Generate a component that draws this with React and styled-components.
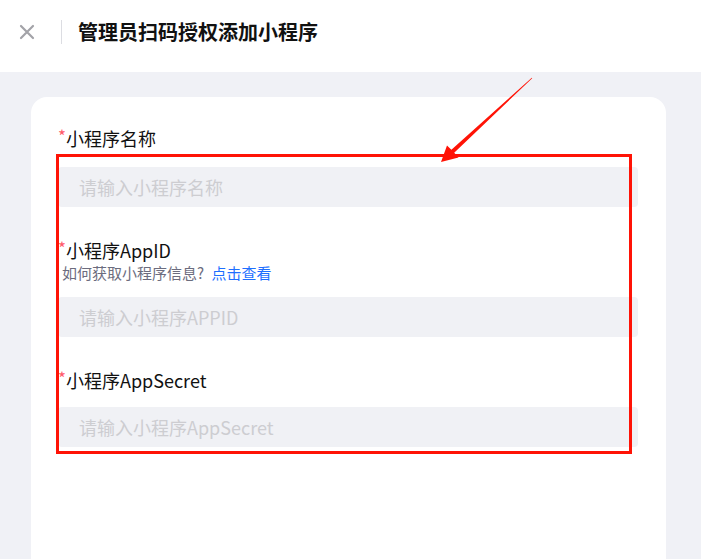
import React from 'react';
import styled, { createGlobalStyle } from 'styled-components';

const GlobalStyle = createGlobalStyle`
  html, body {
    margin: 0;
    padding: 0;
    background: #f0f1f6;
    overflow: hidden;
  }
  body {
    font-family: "Noto Sans CJK SC", "Noto Sans", sans-serif;
  }
`;

const Page = styled.div`
  position: relative;
  width: 701px;
  height: 559px;
  overflow: hidden;
  background: #f0f1f6;
`;

const Header = styled.header`
  height: 72px;
  background: #fff;
  display: flex;
  align-items: center;
  padding: 0 0 8px 19px;
  box-sizing: border-box;
`;

const CloseButton = styled.button`
  width: 16px;
  height: 16px;
  padding: 0;
  border: none;
  background: none;
  display: flex;
  align-items: center;
  justify-content: center;
  cursor: pointer;
`;

const Divider = styled.div`
  width: 1px;
  height: 24px;
  background: #dcdde2;
  margin: 0 16px 0 26px;
`;

const Title = styled.h1`
  margin: 0;
  font-size: 20px;
  line-height: 28px;
  font-weight: 700;
  color: #111;
`;

const Body = styled.main`
  padding: 25px 35px 0 31px;
`;

const Card = styled.section`
  background: #fff;
  border-radius: 16px;
  min-height: 600px;
  padding: 29px 28px 0 27px;
  box-sizing: border-box;
`;

const Field = styled.div`
  display: flex;
  flex-direction: column;
  margin-bottom: 31px;
`;

const Label = styled.label`
  font-size: 18px;
  line-height: 24px;
  color: #111;
  display: flex;
  align-items: flex-start;
`;

const Star = styled.span`
  color: #ff5a6a;
  font-size: 17px;
  line-height: 20px;
`;

const Hint = styled.div`
  font-size: 15px;
  line-height: 20px;
  color: #6c6c7e;
  padding-left: 4px;
  margin-top: 1px;
`;

const Link = styled.a`
  color: #1e6fff;
  text-decoration: none;
  margin-left: 4px;
`;

const Input = styled.input`
  margin-top: ${(p) => p.$gap}px;
  height: 40px;
  border: none;
  outline: none;
  border-radius: 4px;
  background: #f0f1f5;
  padding: 0 21px;
  font-family: inherit;
  font-size: 18px;
  color: #333;
  box-sizing: border-box;
  &::placeholder {
    color: #cdcdd1;
  }
`;

const Highlight = styled.div`
  position: absolute;
  left: 56px;
  top: 154px;
  width: 576px;
  height: 300px;
  border: 3px solid #ff1306;
  box-sizing: border-box;
  pointer-events: none;
`;

const Arrow = styled.svg`
  position: absolute;
  left: 0;
  top: 0;
  pointer-events: none;
`;

export default function App() {
  return (
    <Page>
      <GlobalStyle />
      <Header>
        <CloseButton aria-label="close">
          <svg width="16" height="16" viewBox="0 0 16 16">
            <path d="M2 2L14 14M14 2L2 14" stroke="#a3a3a8" strokeWidth="2.2" strokeLinecap="round" />
          </svg>
        </CloseButton>
        <Divider />
        <Title>管理员扫码授权添加小程序</Title>
      </Header>
      <Body>
        <Card>
          <Field>
            <Label><Star>*</Star>小程序名称</Label>
            <Input $gap={17} placeholder="请输入小程序名称" />
          </Field>
          <Field>
            <Label><Star>*</Star>小程序AppID</Label>
            <Hint>如何获取小程序信息? <Link href="#">点击查看</Link></Hint>
            <Input $gap={14} placeholder="请输入小程序APPID" />
          </Field>
          <Field>
            <Label><Star>*</Star>小程序AppSecret</Label>
            <Input $gap={15} placeholder="请输入小程序AppSecret" />
          </Field>
        </Card>
      </Body>
      <Highlight />
      <Arrow width="701" height="559" viewBox="0 0 701 559">
        <polygon
          points="532.2,78.2 454.2,152.7 458.5,157.5 441,162 447,145.5 451.4,149.7 531.8,77.8"
          fill="#ff1306"
        />
      </Arrow>
    </Page>
  );
}
